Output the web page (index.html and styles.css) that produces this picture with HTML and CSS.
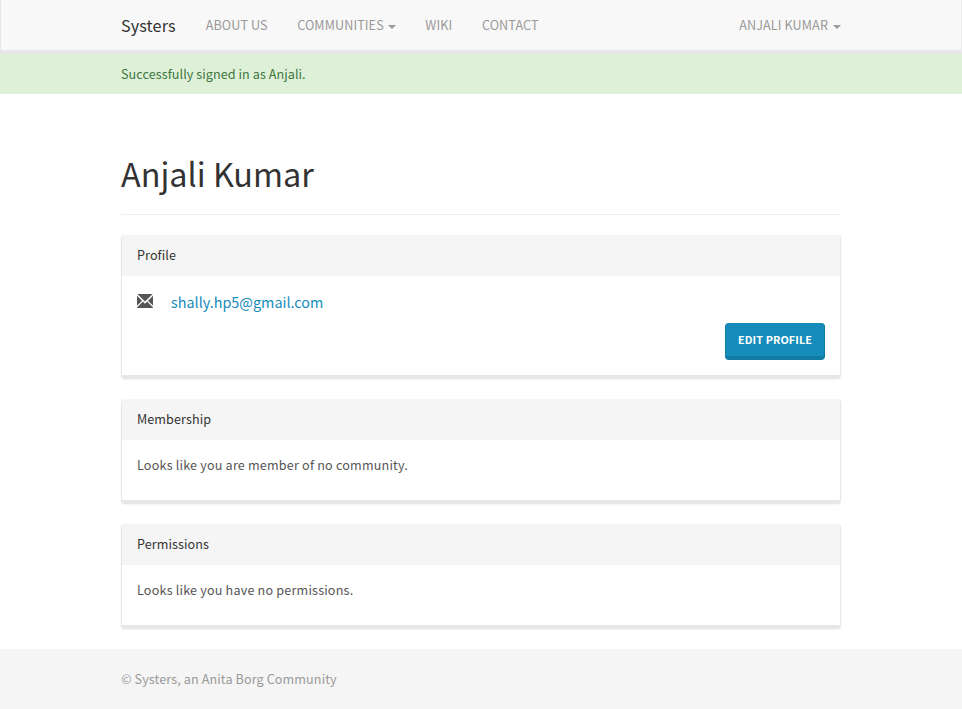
FILE: index.html
```html
<!DOCTYPE html>
<html lang="en">
<head>
<meta charset="utf-8">
<title>Anjali Kumar - Systers</title>
<link rel="stylesheet" href="styles.css">
</head>
<body>
<nav class="navbar">
  <div class="container navbar-inner">
    <a class="brand">Systers</a>
    <a class="nav-link nav-about">About us</a>
    <a class="nav-link nav-communities">Communities<span class="caret"></span></a>
    <a class="nav-link nav-wiki">Wiki</a>
    <a class="nav-link">Contact</a>
    <a class="nav-link nav-user">Anjali Kumar<span class="caret"></span></a>
  </div>
</nav>
<div class="alert"><div class="container">Successfully signed in as Anjali.</div></div>
<main class="container main">
  <h1 class="title">Anjali Kumar</h1>
  <section class="panel">
    <h2 class="panel-heading">Profile</h2>
    <div class="panel-body profile">
      <div class="contact">
        <svg class="envelope" viewBox="0 0 16 14"><path d="M.3 0h15.400L8 7.600zM0 1.800L5 6.700 0 11.700zM16 1.800V11.700L11 6.700zM5.900 7.600L8 9.700l2.100-2.100L16 13.400V14H0v-.600z"/></svg>
        <a class="email">shally.hp5@gmail.com</a>
      </div>
      <a class="button">Edit profile</a>
    </div>
  </section>
  <section class="panel">
    <h2 class="panel-heading">Membership</h2>
    <div class="panel-body"><p class="message">Looks like you are member of no community.</p></div>
  </section>
  <section class="panel">
    <h2 class="panel-heading">Permissions</h2>
    <div class="panel-body"><p class="message">Looks like you have no permissions.</p></div>
  </section>
</main>
<footer class="footer"><div class="container">© Systers, an Anita Borg Community</div></footer>
</body>
</html>
```
FILE: styles.css
```css
* { box-sizing: border-box; }
body {
  margin: 0;
  background: #fff;
  color: #555;
  font: 12.6px/20px "Noto Sans CJK SC", "Noto Sans", sans-serif;
}
.container { width: 720px; margin: 0 auto; }
.navbar {
  height: 54px;
  background: #f8f8f8;
  border: solid #e7e7e7;
  border-width: 0 1px 4px;
}
.navbar-inner { display: flex; height: 50px; line-height: 50px; }
.brand { color: #333; font-size: 16.2px; letter-spacing: .1px; margin-right: 30px; }
.nav-link {
  color: #999;
  letter-spacing: .1px;
  text-transform: uppercase;
  margin-right: 29.600px;
  white-space: nowrap;
}
.nav-user { margin: 0 0 0 auto; letter-spacing: .12px; }
.caret {
  display: inline-block;
  margin-left: 4px;
  vertical-align: middle;
  border: 4px solid transparent;
  border-top-color: #999;
  border-bottom: 0;
}
.nav-user .caret { margin-left: 5px; }
.alert { height: 40px; padding-top: 10px; background: #dff0d8; color: #3c763d; letter-spacing: .07px; }
.main { padding-top: 60px; }
.title {
  height: 61px;
  margin: 0 0 20px;
  border-bottom: 1px solid #eee;
  color: #333;
  font-size: 32.4px;
  font-weight: 400;
  line-height: 38px;
}
.panel {
  margin-bottom: 20px;
  border: solid #e7e7e7;
  border-width: 0 1px 4px;
  border-radius: 4px;
  box-shadow: 0 1px 2px rgba(0, 0, 0, .05);
}
.panel-heading {
  height: 41px;
  margin: 0;
  padding: 10px 15px;
  border-radius: 3px 3px 0 0;
  background: #f5f5f5;
  color: #333;
  font-size: inherit;
  font-weight: 400;
  letter-spacing: .08px;
}
.panel-body { height: 60px; padding: 15px; }
.message { margin: 0; letter-spacing: .19px; }
.profile { height: 99px; display: flex; flex-direction: column; }
.contact { display: flex; align-items: flex-start; height: 32px; }
.envelope { width: 16px; height: 14px; margin: 3px 18px 0 0; fill: #555; }
.email { color: #158cba; font-size: 14.4px; line-height: 22px; }
.button {
  align-self: flex-end;
  width: 100px;
  height: 37px;
  border: solid #127ba3;
  border-width: 0 1px 4px;
  border-radius: 4px;
  background: #158cba;
  color: #fff;
  font-size: 10.8px;
  font-weight: 700;
  letter-spacing: .1px;
  line-height: 32px;
  text-align: center;
  text-transform: uppercase;
}
.footer { height: 60px; padding-top: 20px; background: #f5f5f5; color: #999; letter-spacing: .11px; }
```
